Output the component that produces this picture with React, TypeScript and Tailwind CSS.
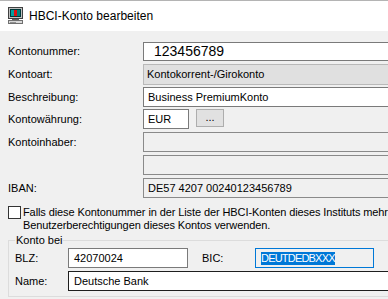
import type { ReactNode } from 'react';

function ComputerIcon() {
  return (
    <svg width="16" height="18" viewBox="0 0 16 18" shapeRendering="crispEdges">
      <rect x="0.5" y="0.5" width="14" height="11" fill="#c0c0c0" stroke="#404040" />
      <rect x="2" y="2" width="11" height="8" fill="#003838" />
      <rect x="3" y="3" width="3" height="6" fill="#00a0a0" />
      <rect x="6" y="3" width="3" height="6" fill="#e01010" />
      <rect x="9" y="3" width="3" height="6" fill="#008080" />
      <rect x="4" y="12" width="7" height="1" fill="#606060" />
      <rect x="0.5" y="13.5" width="14" height="3" fill="#d8d8d8" stroke="#707070" />
      <rect x="2" y="15" width="6" height="1" fill="#909090" />
    </svg>
  );
}

function Row({ label, mt, h, children }: { label: string; mt: string; h: string; children: ReactNode }) {
  return (
    <div className={`flex items-center ${mt} ${h}`}>
      <div className="w-[135px] shrink-0 whitespace-nowrap">{label}</div>
      {children}
    </div>
  );
}

export default function App() {
  return (
    <div className="w-[388px] h-[299px] overflow-hidden bg-[#f0f0f0] font-['Liberation_Sans',Arial,sans-serif] text-[11px] text-black">
      <div className="flex h-[31px] items-center gap-[5px] border-t border-[#b4b4b4] bg-white pl-2">
        <ComputerIcon />
        <span className="text-[12px] text-[#000]">HBCI-Konto bearbeiten</span>
      </div>

      <div className="pl-2">
        <Row label="Kontonummer:" mt="mt-[11px]" h="h-[19px]">
          <div className="flex h-full w-[260px] shrink-0 items-center border border-[#7a7a7a] bg-white pl-[10px] text-[14px]">
            123456789
          </div>
        </Row>
        <Row label="Kontoart:" mt="mt-[3px]" h="h-[21px]">
          <div className="flex h-full w-[260px] shrink-0 items-center border border-[#b9b9b9] bg-[#e0e0e0] pl-[3px]">
            Kontokorrent-/Girokonto
          </div>
        </Row>
        <Row label="Beschreibung:" mt="mt-[2px]" h="h-[20px]">
          <div className="flex h-full w-[260px] shrink-0 items-center border border-[#7a7a7a] bg-white pl-[4px]">
            Business PremiumKonto
          </div>
        </Row>
        <Row label="Kontowährung:" mt="mt-[2px]" h="h-[20px]">
          <div className="flex h-full w-[46px] shrink-0 items-center border border-[#7a7a7a] bg-white pl-[4px]">
            EUR
          </div>
          <div className="ml-[7px] flex h-[18px] w-[28px] shrink-0 items-center justify-center self-start border border-[#adadad] bg-[#e1e1e1] pb-[2px] text-[11px]">
            ...
          </div>
        </Row>
        <Row label="Kontoinhaber:" mt="mt-[3px]" h="h-[20px]">
          <div className="h-full w-[260px] shrink-0 border border-[#8a8a8a] bg-[#f0f0f0]" />
        </Row>
        <Row label="" mt="mt-[3px]" h="h-[20px]">
          <div className="h-full w-[260px] shrink-0 border border-[#8a8a8a] bg-[#f0f0f0]" />
        </Row>
        <Row label="IBAN:" mt="mt-[3px]" h="h-[20px]">
          <div className="flex h-full w-[260px] shrink-0 items-center border border-[#8a8a8a] bg-[#f0f0f0] pl-[4px]">
            DE57 4207 00240123456789
          </div>
        </Row>

        <div className="mt-[8px] flex items-start gap-[2px]">
          <div className="h-[13px] w-[13px] shrink-0 border border-[#333333] bg-white" />
          <div className="whitespace-nowrap leading-[13px] tracking-[-0.1px]">
            <div>Falls diese Kontonummer in der Liste der HBCI-Konten dieses Instituts mehrfach vorkommt, die</div>
            <div>Benutzerberechtigungen dieses Kontos verwenden.</div>
          </div>
        </div>

        <fieldset className="mt-[2px] w-[400px] border border-[#dcdcdc] pb-[5px] pl-[6px]">
          <legend className="px-[1px] leading-[13px]">Konto bei</legend>
          <div className="mt-[1px] flex h-[20px] items-center">
            <div className="w-[53px] shrink-0">BLZ:</div>
            <div className="flex h-full w-[120px] shrink-0 items-center border border-[#7a7a7a] bg-white pl-[5px]">
              42070024
            </div>
            <div className="ml-[14px] w-[53px] shrink-0">BIC:</div>
            <div className="flex h-full w-[119px] shrink-0 items-center border border-[#0078d7] bg-[#f0f0f0] pl-[5px]">
              <span className="bg-[#0078d7] leading-[13px] tracking-[-0.8px] text-white">DEUTDEDBXXX</span>
            </div>
          </div>
          <div className="mt-[3px] flex h-[20px] items-center">
            <div className="w-[53px] shrink-0">Name:</div>
            <div className="flex h-full w-[330px] shrink-0 items-center border border-[#1e1e1e] bg-white pl-[5px]">
              Deutsche Bank
            </div>
          </div>
        </fieldset>
      </div>
    </div>
  );
}
